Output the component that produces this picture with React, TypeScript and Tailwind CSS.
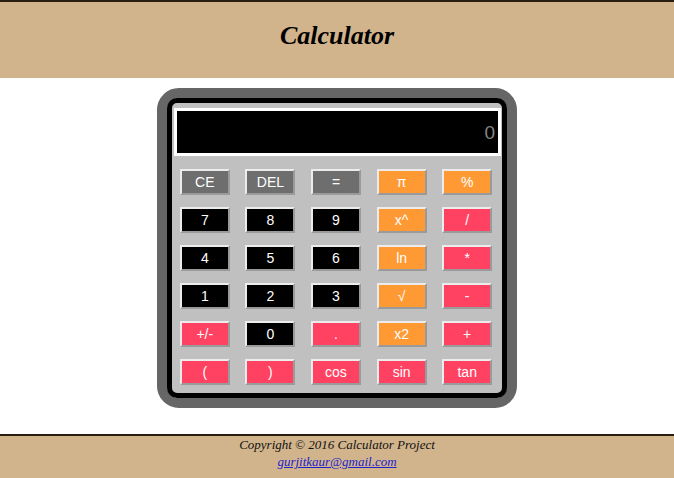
import React from "react";

type Btn = { label: string; kind: "gray" | "orange" | "pink" | "black" };

const rows: Btn[][] = [
  [
    { label: "CE", kind: "gray" },
    { label: "DEL", kind: "gray" },
    { label: "=", kind: "gray" },
    { label: "π", kind: "orange" },
    { label: "%", kind: "orange" },
  ],
  [
    { label: "7", kind: "black" },
    { label: "8", kind: "black" },
    { label: "9", kind: "black" },
    { label: "x^", kind: "orange" },
    { label: "/", kind: "pink" },
  ],
  [
    { label: "4", kind: "black" },
    { label: "5", kind: "black" },
    { label: "6", kind: "black" },
    { label: "ln", kind: "orange" },
    { label: "*", kind: "pink" },
  ],
  [
    { label: "1", kind: "black" },
    { label: "2", kind: "black" },
    { label: "3", kind: "black" },
    { label: "√", kind: "orange" },
    { label: "-", kind: "pink" },
  ],
  [
    { label: "+/-", kind: "pink" },
    { label: "0", kind: "black" },
    { label: ".", kind: "pink" },
    { label: "x2", kind: "orange" },
    { label: "+", kind: "pink" },
  ],
  [
    { label: "(", kind: "pink" },
    { label: ")", kind: "pink" },
    { label: "cos", kind: "pink" },
    { label: "sin", kind: "pink" },
    { label: "tan", kind: "pink" },
  ],
];

const bg: Record<Btn["kind"], string> = {
  gray: "bg-[#6e6e6e]",
  orange: "bg-[#ff9933]",
  pink: "bg-[#ff4262]",
  black: "bg-black",
};

export default function App() {
  return (
    <div className="min-h-[478px] bg-white flex flex-col" style={{ fontFamily: '"Liberation Sans", Arial, sans-serif' }}>
      <header className="h-[78px] border-t-2 border-[#2a1e10] bg-[#d2b48c] flex items-center justify-center pb-[8px]">
        <h1 className="text-[26px] font-bold italic text-black leading-none" style={{ fontFamily: '"Liberation Serif", "Times New Roman", serif' }}>
          Calculator
        </h1>
      </header>

      <div className="mx-auto mt-[10px] w-[360px] h-[320px] border-[10px] border-[#666666] rounded-[22px]">
        <div className="h-full border-[5px] border-black rounded-[10px] bg-[#c0c0c0] flex flex-col">
          <div className="mt-[5px] ml-[2px] mr-[1px] h-[48px] border-[3px] border-white bg-black flex items-center justify-end pr-[3px]">
            <span className="text-[19px] text-[#858585] leading-none">0</span>
          </div>
          <div className="mt-[7px] mr-[2px] grid grid-cols-5 auto-rows-[38px] place-items-center">
            {rows.flat().map((b, i) => (
              <button
                key={i}
                className={`w-[50px] h-[26px] border-2 border-t-[#ececec] border-l-[#ececec] border-b-[#9a9a9a] border-r-[#9a9a9a] text-white text-[14px] leading-none flex items-center justify-center ${bg[b.kind]}`}
              >
                {b.label}
              </button>
            ))}
          </div>
        </div>
      </div>

      <footer className="mt-[26px] flex-1 border-t-2 border-[#2a1e10] bg-[#d2b48c] flex flex-col items-center text-[13px] leading-[17px] italic" style={{ fontFamily: '"Liberation Serif", "Times New Roman", serif' }}>
        <div className="text-[#111]">Copyright © 2016 Calculator Project</div>
        <a href="#" className="text-[#2222cc] underline">gurjitkaur@gmail.com</a>
      </footer>
    </div>
  );
}
